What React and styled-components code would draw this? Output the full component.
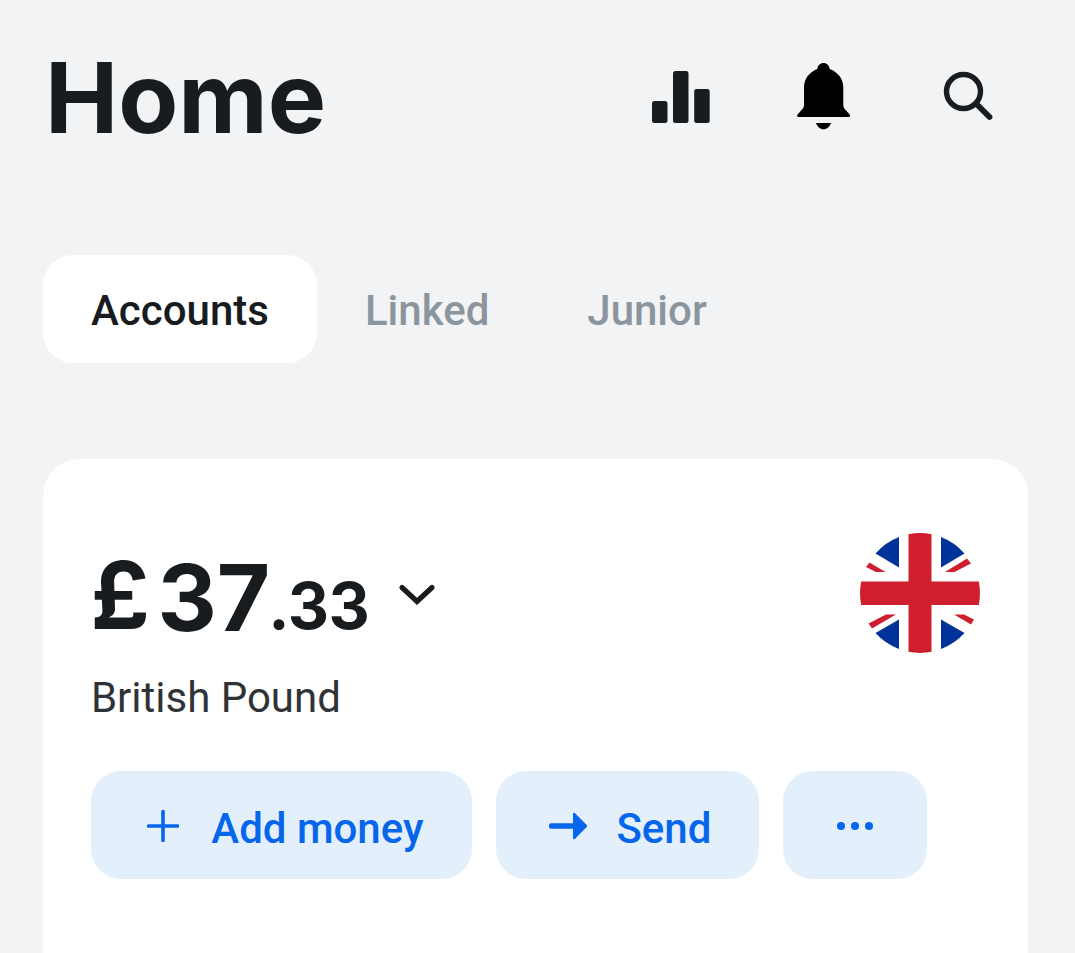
import React, { useState } from "react";
import styled, { createGlobalStyle } from "styled-components";

const tabs = ["Accounts", "Linked", "Junior"];

const ChartIcon = () => (
  <svg width="60" height="54" viewBox="0 0 60 54" fill="#191c1f">
    <rect x="1" y="31" width="15.5" height="22" rx="2.5" />
    <rect x="22" y="1" width="15.5" height="52" rx="2.5" />
    <rect x="43.2" y="19" width="15.5" height="34" rx="2.5" />
  </svg>
);

const BellIcon = () => (
  <svg width="56" height="68" viewBox="0 0 56 68" fill="#000">
    <path d="M27.500 0c-3.400 0-5.800 2.500-6.200 6C13.500 9.200 8 15.500 8 24.500V42c0 2-.8 3.400-2.200 4.800L1.600 51.500C.6 52.600 1 54 2.600 54h50c1.600 0 2-1.400 1-2.500l-4.200-4.700C48 45.400 47.300 44 47.300 42v-17.500c0-9-5.500-15.300-13.600-18.500C33.300 2.500 30.900 0 27.500 0z" />
    <path d="M20 60h15c-1.200 3.700-4 6.300-7.500 6.300s-6.300-2.600-7.500-6.300z" />
  </svg>
);

const SearchIcon = () => (
  <svg width="52" height="52" viewBox="0 0 52 52" fill="none" stroke="#191c1f">
    <circle cx="20.500" cy="20.500" r="17" strokeWidth="5.400" />
    <path d="M33.500 33L46.500 46" strokeWidth="5.800" strokeLinecap="round" />
  </svg>
);

const ChevronIcon = () => (
  <svg width="38" height="24" viewBox="0 0 38 24" fill="none">
    <path
      d="M4 4.500L19 18.500L34 4.500"
      stroke="#191c1f"
      strokeWidth="5.200"
      strokeLinecap="round"
    />
  </svg>
);

const FlagIcon = () => (
  <svg width="120" height="120" viewBox="0 0 120 120">
    <g fill="#003399">
      <path d="M39 4v30.500L15.500 20.500A60 60 0 0 1 39 4z" />
      <path d="M81 4v30.500L104.500 20.500A60 60 0 0 0 81 4z" />
      <path d="M39 116V86.500L15.500 100A60 60 0 0 0 39 116z" />
      <path d="M81 116V86.500L104.500 100A60 60 0 0 1 81 116z" />
    </g>
    <g fill="#cf1f2f">
      <path d="M9.500 29.500L25.500 39H16L6 34z" />
      <path d="M107 25.500L85 39h9.500L111 30.500z" />
      <path d="M8.500 90.500L26 81.500h10L12 95.500z" />
      <path d="M94 81.500h10L114 86.500L111 91.500z" />
      <path d="M48.500 1.200a60 60 0 0 1 23 0v117.600a60 60 0 0 1-23 0z" />
      <path d="M1.200 48.500h117.600a60 60 0 0 1 0 23.500H1.200a60 60 0 0 1 0-23.500z" />
    </g>
  </svg>
);

const PlusIcon = () => (
  <svg width="32" height="32" viewBox="0 0 32 32" fill="none">
    <path
      d="M16 1.500v29M1.500 16h29"
      stroke="#0666eb"
      strokeWidth="3.600"
      strokeLinecap="round"
    />
  </svg>
);

const ArrowIcon = () => (
  <svg width="40" height="28" viewBox="0 0 40 28" fill="#0666eb">
    <rect x="1" y="11.300" width="28" height="5.400" rx="2" />
    <path d="M25 2.200c0-1.500 1.400-1.700 2.300-.8L38.500 12.800q1.100 1.200 0 2.400L27.300 26.600c-.9.900-2.300.7-2.300-.8z" />
  </svg>
);

const DotsIcon = () => (
  <svg width="38" height="10" viewBox="0 0 38 10" fill="#0666eb">
    <circle cx="5" cy="5" r="4" />
    <circle cx="19" cy="5" r="4" />
    <circle cx="33" cy="5" r="4" />
  </svg>
);

const App = () => {
  const [active, setActive] = useState("Accounts");

  return (
    <Page>
      <GlobalStyle />
      <Header>
        <Title>Home</Title>
        <HeaderIcons>
          <ChartIcon />
          <BellIcon />
          <SearchIcon />
        </HeaderIcons>
      </Header>
      <Tabs>
        {tabs.map((tab) => (
          <Tab key={tab} $active={tab === active} onClick={() => setActive(tab)}>
            {tab}
          </Tab>
        ))}
      </Tabs>
      <Card>
        <CardTop>
          <Balance>
            <Amount>
              <Currency>£</Currency>
              <Whole>37</Whole>
              <Pence>.33</Pence>
              <ChevronIcon />
            </Amount>
            <AccountName>British Pound</AccountName>
          </Balance>
          <FlagIcon />
        </CardTop>
        <Actions>
          <Action $width={381} $shift={7}>
            <PlusIcon />
            <ActionLabel $gap={32}>Add money</ActionLabel>
          </Action>
          <Action $width={263} $shift={4}>
            <ArrowIcon />
            <ActionLabel $gap={28}>Send</ActionLabel>
          </Action>
          <Action $width={144} $shift={0} aria-label="More">
            <DotsIcon />
          </Action>
        </Actions>
      </Card>
    </Page>
  );
};

export default App;

const GlobalStyle = createGlobalStyle`
  * {
    box-sizing: border-box;
  }
  body {
    margin: 0;
    background-color: #f2f3f5;
  }
  svg {
    display: block;
    flex-shrink: 0;
  }
`;

const Page = styled.div`
  width: 1075px;
  height: 953px;
  padding: 47px 47px 0 43px;
  display: flex;
  flex-direction: column;
  overflow: hidden;
  background-color: #f2f3f5;
  color: #191c1f;
  font-family: Roboto, sans-serif;
`;

const Header = styled.header`
  height: 100px;
  padding: 0 33px 0 2px;
  display: flex;
  justify-content: space-between;
`;

const Title = styled.h1`
  margin: 0;
  font-family: Inter, sans-serif;
  font-size: 98px;
  line-height: 101px;
  font-weight: 700;
`;

const HeaderIcons = styled.div`
  height: 100px;
  display: flex;
  align-items: center;
  gap: 85px;

  svg:last-child {
    margin-left: 6px;
  }
`;

const Tabs = styled.nav`
  margin-top: 108px;
  display: flex;
`;

const Tab = styled.button`
  height: 108px;
  padding: 3px 48px 0;
  border: none;
  border-radius: 30px;
  background-color: ${({ $active }) => ($active ? "#fff" : "transparent")};
  color: ${({ $active }) => ($active ? "#191c1f" : "#8b959e")};
  font-family: Roboto, sans-serif;
  font-size: 42px;
  font-weight: 500;

  &:last-child {
    padding-left: 50px;
  }
`;

const Card = styled.section`
  flex: 1;
  width: 985px;
  margin-top: 96px;
  padding: 74px 48px 0 48.4px;
  border-radius: 36px 36px 0 0;
  background-color: #fff;
`;

const CardTop = styled.div`
  height: 238px;
  display: flex;
  justify-content: space-between;
`;

const Balance = styled.div`
  padding-top: 15px;
`;

const Amount = styled.div`
  height: 100px;
  display: flex;
  font-family: Inter, sans-serif;
  font-weight: 700;
  line-height: 100px;

  svg {
    margin: 35px 0 0 29px;
  }
`;

const Currency = styled.span`
  width: 67px;
  margin-top: -3px;
  margin-left: -1px;
  font-size: 93px;
`;

const Whole = styled.span`
  font-size: 92px;
`;

const Pence = styled.span`
  margin-top: 8px;
  margin-left: -2px;
  font-size: 64px;
  letter-spacing: -0.5px;
`;

const AccountName = styled.div`
  margin-top: 25px;
  margin-left: -0.5px;
  color: #303336;
  font-size: 42px;
  line-height: 50px;
`;

const Actions = styled.div`
  display: flex;
  gap: 24px;
`;

const Action = styled.button`
  width: ${({ $width }) => $width}px;
  height: 108px;
  padding: 1px 0 0 ${({ $shift }) => $shift}px;
  display: flex;
  align-items: center;
  justify-content: center;
  border: none;
  border-radius: 30px;
  background-color: #e4effc;
  color: #0666eb;
  font-family: Roboto, sans-serif;
`;

const ActionLabel = styled.span`
  margin-left: ${({ $gap }) => $gap}px;
  padding-top: 5px;
  font-size: 42px;
  font-weight: 500;
`;
